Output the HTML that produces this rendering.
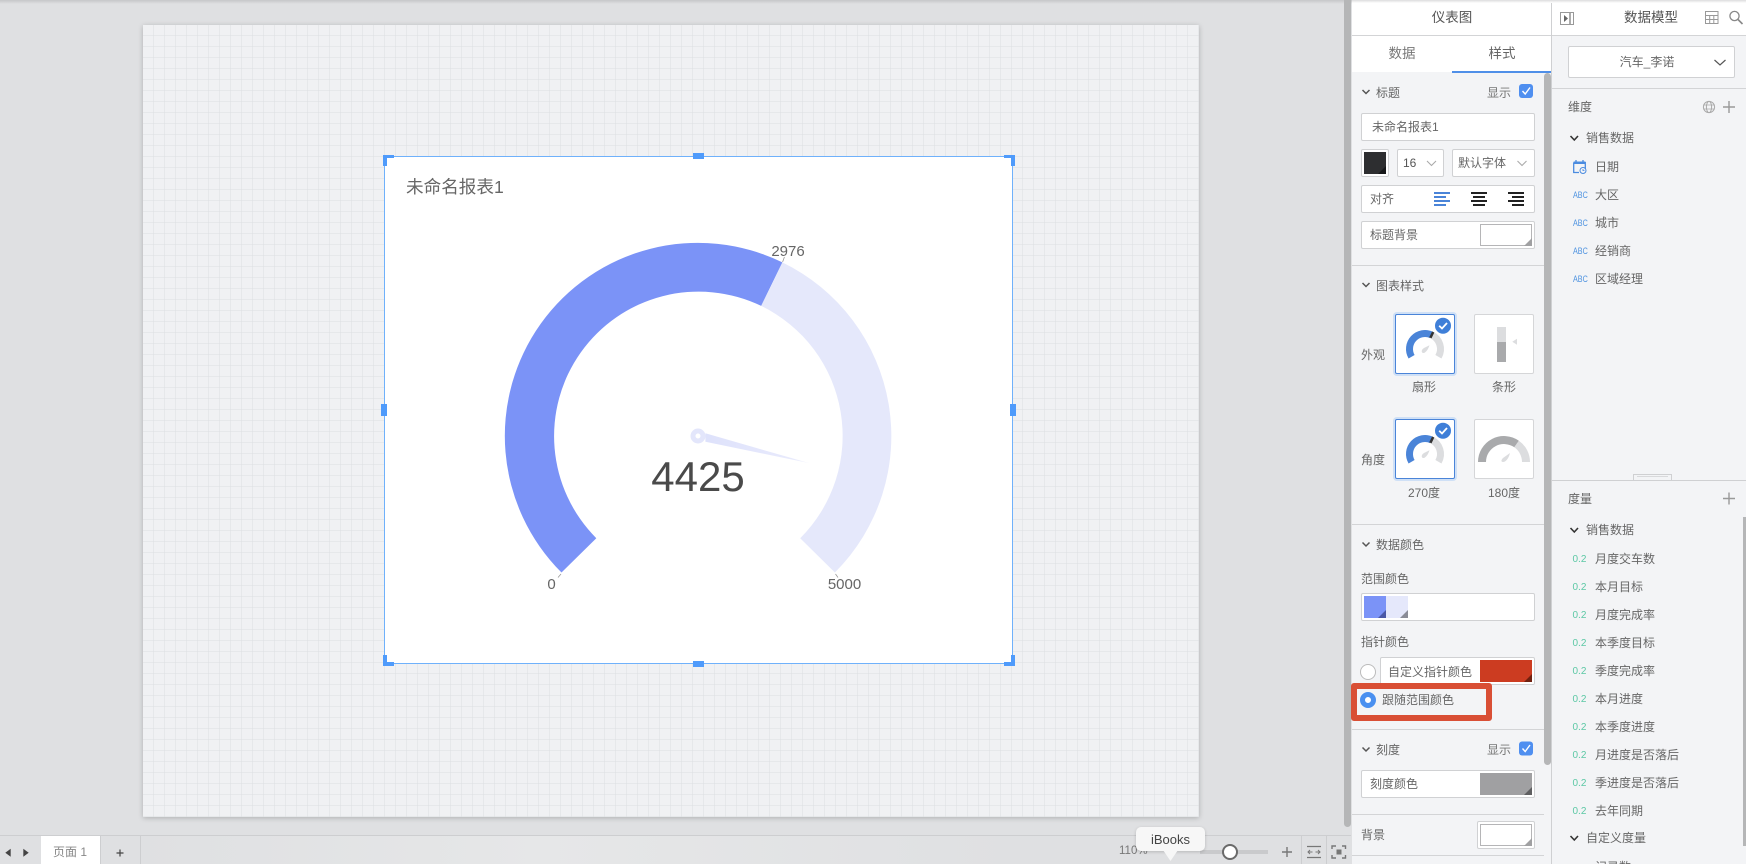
<!DOCTYPE html>
<html lang="zh">
<head>
<meta charset="utf-8">
<title>仪表图</title>
<style>
html,body{margin:0;padding:0;width:1746px;height:864px;overflow:hidden;background:#dfe0e2}
body{position:relative;font-family:"Liberation Sans","Noto Sans CJK SC",sans-serif;font-size:12px;color:#666}
div,span,svg{position:absolute;box-sizing:border-box}
.t{white-space:nowrap;line-height:16px;font-size:12px;color:#666}
.c{transform:translateX(-50%)}
.box{background:#fff;border:1px solid #d0d1d3;border-radius:2px}
.hr{left:1352px;width:192px;height:1px;background:#d3d4d6}
.hd{background:#4f9bfb}
.tile{width:60px;height:60px;background:#fff;border:1px solid #d5d6d8;border-radius:2px}
.sel{border:1px solid #4a84d8;box-shadow:0 0 0 2px #cfe0f6}
.abc{font-size:9px;color:#4f93e0;transform:scaleX(.8);transform-origin:left center;line-height:10px;white-space:nowrap}
.nm{font-size:10px;color:#5cc8a5;line-height:12px;white-space:nowrap}
</style>
</head>
<body>
<div style="left:0;top:0;width:1746px;height:4px;background:linear-gradient(#c6c7c9,#dfe0e2)"></div>

<!-- canvas -->
<div style="left:143px;top:25px;width:1056px;height:792px;background-color:#f0f1f3;background-image:linear-gradient(to right,transparent 10.5px,#dcdee2 10.5px),linear-gradient(to bottom,transparent 10.5px,#dcdee2 10.5px);background-size:11px 11px;box-shadow:0 1px 5px rgba(0,0,0,.22)"></div>

<!-- chart -->
<div style="left:384px;top:156px;width:629px;height:508px;background:#fff;border:1px solid #6fb1fb"></div>
<div class="t" style="left:406px;top:177px;font-size:17.6px;line-height:20px;color:#666">未命名报表1</div>
<svg style="left:0;top:0" width="1746" height="864" viewBox="0 0 1746 864">
  <defs>
    <linearGradient id="ng" gradientUnits="userSpaceOnUse" x1="698" y1="436" x2="810" y2="463">
      <stop offset="0" stop-color="#dde1fb"/><stop offset=".85" stop-color="#e8eafc"/><stop offset="1" stop-color="#f5f6fe"/>
    </linearGradient>
  </defs>
  <path d="M561.5 572.5 A193 193 0 0 1 782.4 262.4 L761.2 305.9 A144.5 144.5 0 0 0 596.3 538.2 Z" fill="#7b93f7"/>
  <path d="M782.4 262.4 A193 193 0 0 1 834.9 572.5 L800.2 538.2 A144.5 144.5 0 0 0 761.2 305.9 Z" fill="#e5e8fb"/>
  <path d="M782.6 262 L784.4 257 M561 574 L558 577.5 M835.5 574 L838 577.5" stroke="#999" stroke-width=".8" fill="none"/>
  <path d="M705.4 433.3 L809.8 463.3 L705.4 441.7 Z" fill="url(#ng)"/>
  <circle cx="698" cy="436" r="5" fill="#fff" stroke="#e3e6fb" stroke-width="5"/>
  <text x="698" y="491" text-anchor="middle" font-size="42" fill="#4a4a4a" font-family="Liberation Sans, sans-serif">4425</text>
  <text x="788" y="256" text-anchor="middle" font-size="15" fill="#666" font-family="Liberation Sans, sans-serif">2976</text>
  <text x="551.5" y="589" text-anchor="middle" font-size="15" fill="#666" font-family="Liberation Sans, sans-serif">0</text>
  <text x="844.5" y="589" text-anchor="middle" font-size="15" fill="#666" font-family="Liberation Sans, sans-serif">5000</text>
</svg>
<!-- handles -->
<div class="hd" style="left:383px;top:155px;width:11px;height:3px"></div><div class="hd" style="left:383px;top:155px;width:4px;height:11px"></div>
<div class="hd" style="left:1004px;top:155px;width:11px;height:3px"></div><div class="hd" style="left:1011px;top:155px;width:4px;height:11px"></div>
<div class="hd" style="left:383px;top:662px;width:11px;height:4px"></div><div class="hd" style="left:383px;top:655px;width:4px;height:11px"></div>
<div class="hd" style="left:1004px;top:662px;width:11px;height:4px"></div><div class="hd" style="left:1011px;top:655px;width:4px;height:11px"></div>
<div class="hd" style="left:693px;top:153px;width:11px;height:6px"></div>
<div class="hd" style="left:693px;top:661px;width:11px;height:6px"></div>
<div class="hd" style="left:381px;top:404px;width:6px;height:12px"></div>
<div class="hd" style="left:1010px;top:404px;width:6px;height:12px"></div>

<!-- bottom bar -->
<div style="left:0;top:835px;width:1351px;height:29px;background:linear-gradient(90deg,#dfe0e2 10%,#e6e7e8 40%,#dfe0e2 75%);border-top:1px solid #cdced0"></div>
<div style="left:41px;top:836px;width:59px;height:28px;background:#fff"></div>
<div class="t c" style="left:70px;top:844px;color:#888">页面 1</div>
<div style="left:100px;top:836px;width:1px;height:28px;background:#cdced0"></div>
<div style="left:140px;top:836px;width:1px;height:28px;background:#cdced0"></div>
<div style="left:1301px;top:836px;width:1px;height:28px;background:#cdced0"></div>
<div style="left:1326px;top:836px;width:1px;height:28px;background:#cdced0"></div>
<div class="t" style="left:1119px;top:843px;color:#777;font-size:11.5px">110%</div>
<div style="left:1200px;top:850px;width:68px;height:4px;background:#c9cacc"></div>
<div style="left:1222px;top:844px;width:16px;height:16px;border-radius:50%;background:#fff;border:2px solid #6a6a6a"></div>

<!-- gutter scrollbar -->
<div style="left:1344px;top:0;width:7px;height:827px;background:#b5b6b7;border-radius:0 0 4px 4px"></div>

<!-- style panel -->
<div style="left:1352px;top:0;width:200px;height:864px;background:#f3f4f6;border-right:1px solid #cfd0d2"></div>
<div style="left:1352px;top:0;width:199px;height:72px;background:#fff"></div>
<div style="left:1352px;top:0;width:394px;height:3px;background:linear-gradient(#dcdcde,#fff)"></div>
<div style="left:1352px;top:35px;width:199px;height:1px;background:#d3d4d6"></div>
<div class="t c" style="left:1452px;top:10px;font-size:13.5px;color:#555">仪表图</div>
<div class="t c" style="left:1402px;top:46px;font-size:13.5px;color:#777">数据</div>
<div class="t c" style="left:1502px;top:46px;font-size:13.5px;color:#666">样式</div>
<div style="left:1452px;top:71px;width:99px;height:2px;background:#4f8fe8"></div>
<div style="left:1544px;top:73px;width:7px;height:692px;background:#b5b6b7;border-radius:4px"></div>

<div class="t" style="left:1376px;top:85px">标题</div>
<div class="t" style="left:1487px;top:85px;color:#777">显示</div>
<div class="box" style="left:1361px;top:113px;width:174px;height:28px"></div>
<div class="t" style="left:1372px;top:119px">未命名报表1</div>
<div class="box" style="left:1361px;top:149px;width:28px;height:28px"></div>
<div class="box" style="left:1397px;top:149px;width:47px;height:28px"></div>
<div class="t" style="left:1403px;top:155px;color:#555">16</div>
<div class="box" style="left:1452px;top:149px;width:83px;height:28px"></div>
<div class="t" style="left:1458px;top:155px">默认字体</div>
<div class="box" style="left:1361px;top:185px;width:174px;height:28px"></div>
<div class="t" style="left:1370px;top:191px">对齐</div>
<div class="box" style="left:1361px;top:221px;width:174px;height:28px"></div>
<div class="t" style="left:1370px;top:227px">标题背景</div>
<div class="hr" style="top:265px"></div>
<div class="t" style="left:1376px;top:278px">图表样式</div>

<div class="t" style="left:1361px;top:347px">外观</div>
<div class="tile sel" style="left:1395px;top:314px"></div>
<div class="tile" style="left:1474px;top:314px"></div>
<div class="t c" style="left:1424px;top:379px">扇形</div>
<div class="t c" style="left:1504px;top:379px">条形</div>
<div class="t" style="left:1361px;top:452px">角度</div>
<div class="tile sel" style="left:1395px;top:419px"></div>
<div class="tile" style="left:1474px;top:419px"></div>
<div class="t c" style="left:1424px;top:485px">270度</div>
<div class="t c" style="left:1504px;top:485px">180度</div>
<div class="hr" style="top:524px"></div>
<div class="t" style="left:1376px;top:537px">数据颜色</div>
<div class="t" style="left:1361px;top:571px">范围颜色</div>
<div class="box" style="left:1361px;top:593px;width:174px;height:28px"></div>
<div class="t" style="left:1361px;top:634px">指针颜色</div>
<div class="box" style="left:1380px;top:657px;width:155px;height:28px"></div>
<div class="t" style="left:1388px;top:664px">自定义指针颜色</div>
<div style="left:1360px;top:664px;width:16px;height:16px;border-radius:50%;background:#fff;border:1px solid #bbb"></div>
<div style="left:1351px;top:683px;width:141px;height:38px;border:6px solid #d94f35;border-radius:3px;background:#f3f4f6"></div>
<div style="left:1360px;top:692px;width:16px;height:16px;border-radius:50%;background:#fff;border:5px solid #4a90f0"></div>
<div class="t" style="left:1382px;top:692px">跟随范围颜色</div>
<div class="hr" style="top:729px"></div>
<div class="t" style="left:1376px;top:742px">刻度</div>
<div class="t" style="left:1487px;top:742px;color:#777">显示</div>
<div class="box" style="left:1361px;top:770px;width:174px;height:28px"></div>
<div class="t" style="left:1370px;top:776px">刻度颜色</div>
<div class="hr" style="top:814px"></div>
<div class="t" style="left:1361px;top:827px">背景</div>
<div class="box" style="left:1477px;top:821px;width:58px;height:28px"></div>
<div class="hr" style="top:855px"></div>

<!-- data model panel -->
<div style="left:1552px;top:3px;width:194px;height:32px;background:#fff"></div>
<div style="left:1552px;top:35px;width:194px;height:1px;background:#d3d4d6"></div>
<div class="t c" style="left:1651px;top:10px;font-size:13.5px;color:#555">数据模型</div>
<div style="left:1552px;top:36px;width:194px;height:828px;background:#f3f4f6"></div>
<div class="box" style="left:1568px;top:46px;width:167px;height:32px"></div>
<div class="t c" style="left:1647px;top:54px">汽车_李诺</div>
<div style="left:1552px;top:88px;width:194px;height:1px;background:#d3d4d6"></div>
<div class="t" style="left:1568px;top:99px">维度</div>
<div class="t" style="left:1586px;top:130px">销售数据</div>
<div class="t" style="left:1595px;top:159px">日期</div>
<span class="abc" style="left:1573px;top:190px">ABC</span><div class="t" style="left:1595px;top:187px">大区</div>
<span class="abc" style="left:1573px;top:218px">ABC</span><div class="t" style="left:1595px;top:215px">城市</div>
<span class="abc" style="left:1573px;top:246px">ABC</span><div class="t" style="left:1595px;top:243px">经销商</div>
<span class="abc" style="left:1573px;top:274px">ABC</span><div class="t" style="left:1595px;top:271px">区域经理</div>

<div style="left:1552px;top:480px;width:194px;height:1px;background:#cfd0d2"></div>
<div style="left:1633px;top:474px;width:39px;height:7px;border:1px solid #cfd0d2;background:#f3f4f6"></div>
<div style="left:1637px;top:476px;width:31px;height:1px;background:#d8d9db"></div>
<div class="t" style="left:1568px;top:491px">度量</div>
<div class="t" style="left:1586px;top:522px">销售数据</div>
<span class="nm" style="left:1572.5px;top:554px">0.2</span><div class="t" style="left:1595px;top:551px">月度交车数</div>
<span class="nm" style="left:1572.5px;top:582px">0.2</span><div class="t" style="left:1595px;top:579px">本月目标</div>
<span class="nm" style="left:1572.5px;top:610px">0.2</span><div class="t" style="left:1595px;top:607px">月度完成率</div>
<span class="nm" style="left:1572.5px;top:638px">0.2</span><div class="t" style="left:1595px;top:635px">本季度目标</div>
<span class="nm" style="left:1572.5px;top:666px">0.2</span><div class="t" style="left:1595px;top:663px">季度完成率</div>
<span class="nm" style="left:1572.5px;top:694px">0.2</span><div class="t" style="left:1595px;top:691px">本月进度</div>
<span class="nm" style="left:1572.5px;top:722px">0.2</span><div class="t" style="left:1595px;top:719px">本季度进度</div>
<span class="nm" style="left:1572.5px;top:750px">0.2</span><div class="t" style="left:1595px;top:747px">月进度是否落后</div>
<span class="nm" style="left:1572.5px;top:778px">0.2</span><div class="t" style="left:1595px;top:775px">季进度是否落后</div>
<span class="nm" style="left:1572.5px;top:806px">0.2</span><div class="t" style="left:1595px;top:803px">去年同期</div>
<div class="t" style="left:1586px;top:830px">自定义度量</div>
<div class="t" style="left:1595px;top:859px">记录数</div>
<div style="left:1743px;top:517px;width:3px;height:329px;background:#b5b6b7"></div>

<!-- icons overlay -->
<svg style="left:0;top:0" width="1746" height="864" viewBox="0 0 1746 864" fill="none">
  <!-- section chevrons -->
  <g stroke="#555" stroke-width="1.5">
    <path d="M1362.5 90 L1366 93.5 L1369.5 90"/>
    <path d="M1362.5 283 L1366 286.5 L1369.5 283"/>
    <path d="M1362.5 542.5 L1366 546 L1369.5 542.5"/>
    <path d="M1362.5 747.5 L1366 751 L1369.5 747.5"/>
  </g>
  <g stroke="#333" stroke-width="1.6">
    <path d="M1570.5 136 L1574.3 140 L1578 136"/>
    <path d="M1570.5 528 L1574.3 532 L1578 528"/>
    <path d="M1570.5 836 L1574.3 840 L1578 836"/>
  </g>
  <g stroke="#aaa" stroke-width="1.1">
    <path d="M1427 161 L1431.5 165.5 L1436 161"/>
    <path d="M1517.5 161 L1522 165.5 L1526.5 161"/>
  </g>
  <path d="M1714.5 60 L1720 65 L1725.5 60" stroke="#555" stroke-width="1.2"/>

  <!-- checkboxes -->
  <rect x="1519" y="84" width="14" height="14" rx="3" fill="#4f8ff0"/>
  <path d="M1522.5 91 L1525.2 94 L1530 87.5" stroke="#fff" stroke-width="1.4"/>
  <rect x="1519" y="741.5" width="14" height="14" rx="3" fill="#4f8ff0"/>
  <path d="M1522.5 748.5 L1525.2 751.5 L1530 745" stroke="#fff" stroke-width="1.4"/>

  <!-- title colour swatch -->
  <rect x="1364" y="152" width="22" height="22" fill="#2d2e30"/>
  <path d="M1386 166 V174 H1378 Z" fill="#17181a"/>

  <!-- align icons -->
  <g stroke="#4a84d8" stroke-width="2">
    <path d="M1434 193H1450M1434 197H1446M1434 201H1450M1434 205H1446"/>
  </g>
  <g stroke="#222" stroke-width="2">
    <path d="M1471 193H1487M1473 197H1485M1471 201H1487M1473 205H1485"/>
    <path d="M1508 193H1524M1512 197H1524M1508 201H1524M1512 205H1524"/>
  </g>

  <!-- title bg swatch -->
  <rect x="1480.5" y="224.5" width="51" height="21" fill="#fff" stroke="#b5b5b7"/>
  <path d="M1532 238 V246 H1524 Z" fill="#a0a0a2"/>

  <!-- gauge tile 1 -->
  <g transform="translate(1425,349)">
    <path d="M-13.42 7.75 A15.5 15.5 0 0 1 6.55 -14.05" stroke="#4a84d8" stroke-width="7"/>
    <path d="M6.55 -14.05 A15.5 15.5 0 0 1 13.42 7.75" stroke="#dcdddf" stroke-width="7"/>
    <path d="M5.4 -11.2 L8.2 -17" stroke="#333" stroke-width="2.5"/>
    <path d="M4.5 -3.8 C3 1 0 4.5 -2.2 4 C-4 3 -3.5 0.5 -1 -1 Z" fill="#dcdddf"/>
  </g>
  <circle cx="1443" cy="325.7" r="8" fill="#3f7fd8"/>
  <path d="M1439.2 325.7 L1442 328.5 L1447 323" stroke="#fff" stroke-width="1.8"/>
  <!-- gauge tile 3 -->
  <g transform="translate(1425,454)">
    <path d="M-13.42 7.75 A15.5 15.5 0 0 1 6.55 -14.05" stroke="#4a84d8" stroke-width="7"/>
    <path d="M6.55 -14.05 A15.5 15.5 0 0 1 13.42 7.75" stroke="#dcdddf" stroke-width="7"/>
    <path d="M5.4 -11.2 L8.2 -17" stroke="#333" stroke-width="2.5"/>
    <path d="M4.5 -3.8 C3 1 0 4.5 -2.2 4 C-4 3 -3.5 0.5 -1 -1 Z" fill="#dcdddf"/>
  </g>
  <circle cx="1443" cy="430.7" r="8" fill="#3f7fd8"/>
  <path d="M1439.2 430.7 L1442 433.5 L1447 428" stroke="#fff" stroke-width="1.8"/>

  <!-- bar tile -->
  <rect x="1497" y="327" width="9" height="15" fill="#dcdddf"/>
  <rect x="1497" y="342" width="9" height="20" fill="#a9aaac"/>
  <path d="M1517 338.7 V344.7 L1512.3 341.7 Z" fill="#dcdddf"/>

  <!-- 180 tile -->
  <g transform="translate(1504,462)">
    <path d="M-22 0 A22 22 0 0 1 12.6 -18" stroke="#a9aaac" stroke-width="8"/>
    <path d="M12.6 -18 A22 22 0 0 1 22 0" stroke="#dcdddf" stroke-width="8"/>
    <path d="M6 -9 C4.5 -3 1.5 0 -1 0 C-3.2 0 -3 -2 -1 -4 Z" fill="#dcdddf"/>
  </g>

  <!-- range swatches -->
  <rect x="1364" y="596" width="22" height="22" fill="#7b93f7"/>
  <path d="M1386 610 V618 H1378 Z" fill="#4a58a6"/>
  <rect x="1386" y="596" width="22" height="22" fill="#e5e8fb"/>
  <path d="M1408 610 V618 H1400 Z" fill="#8a8c97"/>

  <!-- pointer swatch -->
  <rect x="1480" y="660" width="52" height="22" fill="#cc3c21"/>
  <path d="M1532 674 V682 H1524 Z" fill="#70200f"/>

  <!-- tick swatch -->
  <rect x="1480" y="773" width="52" height="22" fill="#a0a0a2"/>
  <path d="M1532 787 V795 H1524 Z" fill="#5f5f61"/>

  <!-- bg swatch -->
  <rect x="1480.5" y="824.5" width="51" height="21" fill="#fff" stroke="#b5b5b7"/>
  <path d="M1532 838 V846 H1524 Z" fill="#a0a0a2"/>

  <!-- header icons -->
  <rect x="1560.5" y="12.5" width="13" height="12" stroke="#999" fill="#fff"/>
  <path d="M1564 15 L1568 18.5 L1564 22 Z" fill="#666"/>
  <path d="M1570 13V24" stroke="#888" stroke-width="1.4"/>
  <path d="M1705.5 11.5H1718V23.5H1705.5ZM1705.5 15.5H1718M1705.5 19.5H1718M1709.7 15.5V23.5M1713.8 15.5V23.5" stroke="#999"/>
  <circle cx="1734.5" cy="16" r="4.6" stroke="#888" stroke-width="1.3"/>
  <path d="M1738 19.5 L1742.5 24" stroke="#888" stroke-width="1.6"/>

  <!-- globe / plus -->
  <circle cx="1709" cy="107" r="5.6" stroke="#aaa"/>
  <ellipse cx="1709" cy="107" rx="2.6" ry="5.6" stroke="#aaa"/>
  <path d="M1703.4 105H1714.6M1703.4 109H1714.6" stroke="#aaa" stroke-width=".8"/>
  <path d="M1729 101V113M1723 107H1735" stroke="#999" stroke-width="1.4"/>
  <path d="M1729 492.5V504.5M1723 498.5H1735" stroke="#999" stroke-width="1.4"/>

  <!-- calendar -->
  <path d="M1573.7 162.5H1585.3V169M1579 172.5H1573.7V162.5" stroke="#4a8be0" stroke-width="1.3"/>
  <path d="M1573.7 161.5H1585.3V164H1573.7Z" fill="#4a8be0"/>
  <path d="M1576 160V162M1583 160V162" stroke="#4a8be0" stroke-width="1.3"/>
  <circle cx="1583" cy="170.5" r="3" stroke="#4a8be0" fill="#f3f4f6"/>
  <path d="M1583 169V170.6H1584.5" stroke="#4a8be0" stroke-width=".8"/>

  <!-- bottom bar icons -->
  <path d="M10.7 848.7 V856.7 L5.3 852.7 Z" fill="#444"/>
  <path d="M23.3 848.7 V856.7 L28.7 852.7 Z" fill="#444"/>
  <path d="M120 849.5V856.5M116.5 853H123.5" stroke="#444" stroke-width="1.2"/>
  <path d="M1287 847V857M1282 852H1292" stroke="#777" stroke-width="1.4"/>
  <path d="M1307 846.5H1321M1307 857.5H1321" stroke="#777" stroke-width="1.3"/>
  <path d="M1308 852H1312.5M1315.5 852H1320M1310 850L1308 852L1310 854M1318 850L1320 852L1318 854" stroke="#777"/>
  <path d="M1332 849V846H1336M1342 846H1345.5V849M1345.5 855V858H1342M1336 858H1332V855" stroke="#777" stroke-width="1.4"/>
  <rect x="1336.5" y="849.5" width="5" height="5" fill="#777"/>
</svg>

<!-- tooltip -->
<div style="left:1136px;top:827px;width:69px;height:24px;background:#f7f7f7;border-radius:5px;box-shadow:0 1px 3px rgba(0,0,0,.18)"></div>
<svg style="left:1160px;top:850px" width="22" height="12"><path d="M3 0 H18 L10.5 11 Z" fill="#f7f7f7"/></svg>
<div class="t c" style="left:1170.5px;top:832px;font-size:13px;color:#444;font-family:'Liberation Sans',sans-serif">iBooks</div>
</body>
</html>
